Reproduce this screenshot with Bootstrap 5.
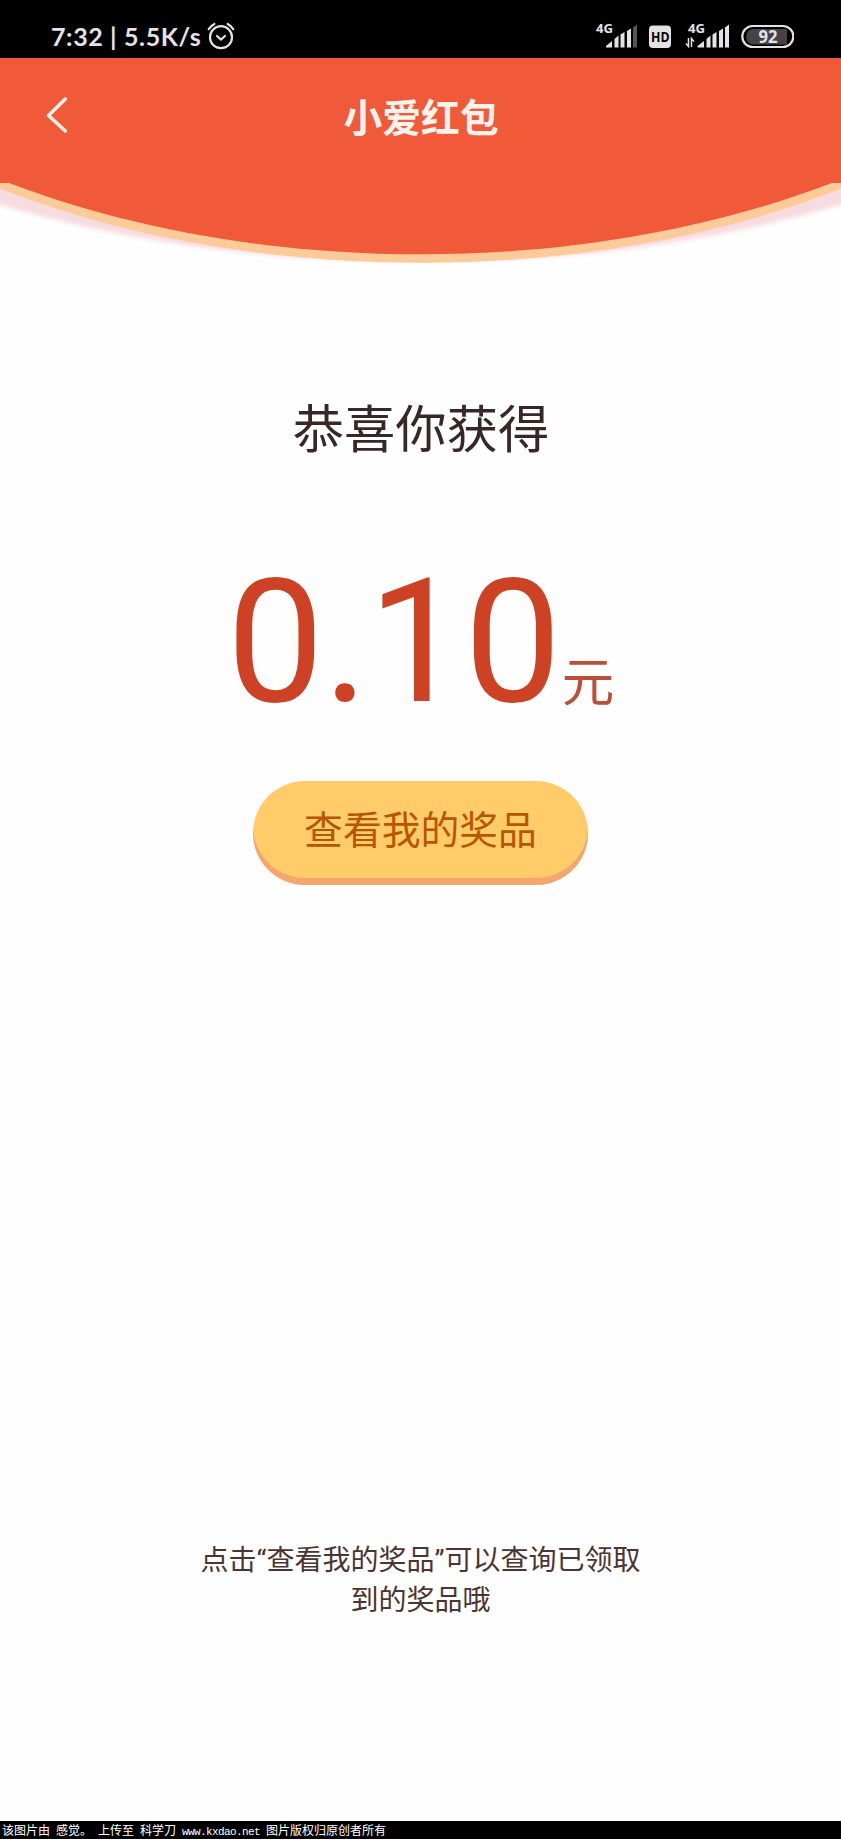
<!DOCTYPE html>
<html lang="zh-CN">
<head>
<meta charset="utf-8">
<meta name="viewport" content="width=device-width, initial-scale=1">
<title>小爱红包</title>
<link rel="stylesheet" href="https://cdn.jsdelivr.net/npm/bootstrap@5.3.0/dist/css/bootstrap.min.css">
<style>
  body { font-family: Roboto, "Noto Sans CJK SC", sans-serif; background: #fefefe; color: #38272a; }
  .screen { height: 1839px; }
  .status-bar { height: 58px; padding: 13px 47px 0 51px; background: #000; color: #e4e2e4; font-family: Lato, sans-serif; font-weight: 700; font-size: 25px; line-height: 46px; white-space: pre; }
  .status-bar .alarm { margin: 9px 0 0 6px; }
  .status-bar text { font-family: "Open Sans", sans-serif; font-weight: 700; }
  .speed { letter-spacing: .62px; }
  .title-bar { height: 125px; background: #f05a38; color: #fff3ec; }
  .title-bar h1 { font-size: 38.8px; line-height: 58px; font-weight: 700; margin: 32px 0 0 1px; }
  .back-link { left: 45px; top: 37px; line-height: 0; }
  .curve { height: 89px; }
  .congrats { font-size: 51.3px; line-height: 76px; margin: 121px 0 0 1px; }
  .amount { height: 204px; margin-top: 71px; color: #cd4224; line-height: 204px; }
  .amount .figure { font-size: 173px; letter-spacing: -.8px; }
  .amount .unit { font-size: 52.5px; color: #ba5038; margin-left: 1px; line-height: 1; }
  .prize-btn { width: 335px; height: 104px; margin-top: 37px; padding: 1px 0 7px; border: 0; border-radius: 52px; background: #ffcc69; color: #b85600; font-size: 38.8px; line-height: 97px; box-shadow: inset 0 -7px #f4a66e; }
  .hint { font-size: 28px; line-height: 40.6px; color: #4b3431; padding-bottom: 199px; }
  .source-line { height: 18px; background: #000; color: #fff; font: 12px/18px "Noto Sans CJK SC", sans-serif; padding-left: 2px; white-space: pre; word-spacing: 3.3px; }
  .source-line .site { font: 11px/18px "Liberation Mono", monospace; letter-spacing: -.6px; }
</style>
</head>
<body>
<div class="screen d-flex flex-column">
  <div class="status-bar d-flex justify-content-between flex-shrink-0">
    <div class="d-flex"><span class="speed">7:32 | 5.5K/s</span>
      <svg class="alarm" width="28" height="28" viewBox="0 0 28 28" fill="none" stroke="#e4e2e4" stroke-width="2.2" stroke-linecap="round"><circle cx="14" cy="15.2" r="11"/><path d="M1.7 7.2Q4.1 3.5 7.4 2M20.6 2Q23.9 3.500 26.3 7.200M10 14l4 3.500 4-3.500"/></svg>
    </div>
    <svg width="199" height="40" viewBox="595 13 199 40" fill="#e4e2e4">
      <text x="596" y="32.5" font-size="12.5" textLength="17" lengthAdjust="spacingAndGlyphs">4G</text>
      <path d="M606 47.5v-1.5l6-5v6.5zM614.5 47.5v-8.5l4-3.5v12zM620.5 47.5v-13l4-2.5v15.5zM627 47.5v-16.500l4-2.500v19z"/><path fill="#555" d="M633 47.500v-20l4-3v23z"/>
      <rect x="649" y="25.500" width="22" height="22.500" rx="4"/><text x="651" y="42" font-size="14.500" fill="#000" textLength="18.500" lengthAdjust="spacingAndGlyphs">HD</text>
      <text x="688" y="32.500" font-size="12.500" textLength="17" lengthAdjust="spacingAndGlyphs">4G</text>
      <path d="M697.500 47.500V46l6.500-5v6.500zM706.500 47.500v-8.500l4-3.500v12zM712.500 47.500v-13l4-2.500v15.500zM719 47.500v-16.500l4-2.500v19zM725 47.500v-20l4-3v23z"/>
      <path d="M688.500 38v8.500l-2.500-3M691.500 47v-8.500l2.500 3" fill="none" stroke="#e4e2e4" stroke-width="1.500"/>
      <rect x="742.300" y="26" width="51" height="21" rx="10.500" fill="#000" stroke="#e4e2e4" stroke-width="2.200"/>
      <path fill="#454346" d="M753 29h34v15.500h-34c-9 0-9-15.500 0-15.500z"/>
      <text x="758.500" y="42.700" font-size="17" textLength="19" lengthAdjust="spacingAndGlyphs">92</text>
    </svg>
  </div>
  <header class="title-bar position-relative d-flex justify-content-center align-items-start flex-shrink-0">
    <a class="back-link position-absolute" href="#" aria-label="返回"><svg width="24" height="40" viewBox="0 0 24 40" fill="none" stroke="#fff0e9" stroke-width="3.600" stroke-linecap="round" stroke-linejoin="round"><path d="M20.300 4L3.500 20.500 20.300 36"/></svg></a>
    <h1>小爱红包</h1>
  </header>
  <svg class="curve d-block w-100 flex-shrink-0" viewBox="0 0 841 89" preserveAspectRatio="none">
    <defs><filter id="soft" x="-5%" y="-20%" width="110%" height="150%"><feGaussianBlur stdDeviation="2"/></filter></defs>
    <path d="M-20 -20V16Q190 80 421 78Q651 80 861 16V-20z" fill="#f7dcdf" filter="url(#soft)"/>
    <path d="M0 0V5.500C122 54 268 79.700 421 79.700S719 54 841 5.500V0z" fill="#fdcb9a"/>
    <path d="M9 0C130 46 272 71.300 421 71.300S711 46 832 0z" fill="#f05a38"/>
  </svg>
  <main class="d-flex flex-column align-items-center flex-grow-1">
    <h2 class="congrats fw-normal mb-0">恭喜你获得</h2>
    <div class="amount d-flex align-items-baseline"><span class="figure">0.10</span><span class="unit">元</span></div>
    <button class="prize-btn btn" type="button">查看我的奖品</button>
    <p class="hint text-center mt-auto mb-0">点击“查看我的奖品”可以查询已领取<br>到的奖品哦</p>
  </main>
  <footer class="source-line flex-shrink-0">该图片由 感觉。 上传至 科学刀 <span class="site">www.kxdao.net</span> 图片版权归原创者所有</footer>
</div>
<script src="https://cdn.jsdelivr.net/npm/bootstrap@5.3.0/dist/js/bootstrap.bundle.min.js"></script>
</body>
</html>
